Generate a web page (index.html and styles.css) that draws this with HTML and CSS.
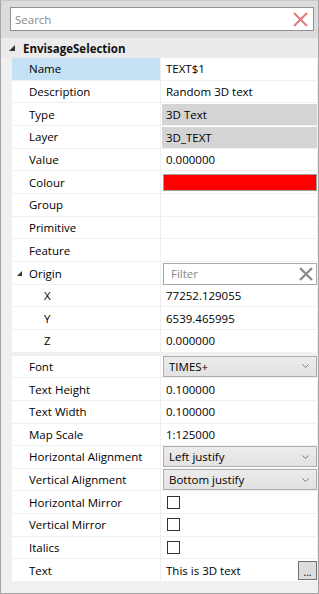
FILE: index.html
```html
<!DOCTYPE html>
<html>
<head>
  <title>Properties</title>
  <link rel="stylesheet" href="styles.css">
</head>
<body>
  <div class="panel">
    <div class="search-bar">
      <div class="search-box">
        <span class="placeholder">Search</span>
        <svg class="clear red" width="15" height="15" viewBox="0 0 15 15"><path d="M1 1 L14 14 M14 1 L1 14" stroke="#e57a7a" stroke-width="2"/></svg>
      </div>
    </div>

    <div class="grid">
      <div class="category">
        <svg class="tri" width="6" height="6" viewBox="0 0 6 6"><polygon points="6,0 6,6 0,6" fill="#333"/></svg>
        <span>EnvisageSelection</span>
      </div>

      <div class="row selected"><div class="name">Name</div><div class="value">TEXT$1</div></div>
      <div class="row"><div class="name">Description</div><div class="value">Random 3D text</div></div>
      <div class="row"><div class="name">Type</div><div class="value"><div class="readonly">3D Text</div></div></div>
      <div class="row"><div class="name">Layer</div><div class="value"><div class="readonly">3D_TEXT</div></div></div>
      <div class="row"><div class="name">Value</div><div class="value">0.000000</div></div>
      <div class="row"><div class="name">Colour</div><div class="value"><div class="swatch"></div></div></div>
      <div class="row"><div class="name">Group</div><div class="value"></div></div>
      <div class="row"><div class="name">Primitive</div><div class="value"></div></div>
      <div class="row"><div class="name">Feature</div><div class="value"></div></div>

      <div class="row">
        <div class="name sub-head">
          <svg class="tri small" width="5" height="5" viewBox="0 0 5 5"><polygon points="5,0 5,5 0,5" fill="#333"/></svg>
          Origin
        </div>
        <div class="value">
          <div class="filter">
            <span class="placeholder">Filter</span>
            <svg class="clear" width="14" height="14" viewBox="0 0 14 14"><path d="M1 1 L13 13 M13 1 L1 13" stroke="#8c8c8c" stroke-width="2.4"/></svg>
          </div>
        </div>
      </div>
      <div class="row"><div class="name child">X</div><div class="value">77252.129055</div></div>
      <div class="row"><div class="name child">Y</div><div class="value">6539.465995</div></div>
      <div class="row last-child"><div class="name child">Z</div><div class="value">0.000000</div></div>

      <div class="row"><div class="name">Font</div><div class="value"><div class="combo">TIMES+<svg width="7" height="4" viewBox="0 0 7 4"><path d="M0.5 0.5 L3.5 3.5 L6.5 0.5" fill="none" stroke="#777"/></svg></div></div></div>
      <div class="row"><div class="name">Text Height</div><div class="value">0.100000</div></div>
      <div class="row"><div class="name">Text Width</div><div class="value">0.100000</div></div>
      <div class="row"><div class="name">Map Scale</div><div class="value">1:125000</div></div>
      <div class="row"><div class="name">Horizontal Alignment</div><div class="value"><div class="combo">Left justify<svg width="7" height="4" viewBox="0 0 7 4"><path d="M0.5 0.5 L3.5 3.5 L6.5 0.5" fill="none" stroke="#777"/></svg></div></div></div>
      <div class="row"><div class="name">Vertical Alignment</div><div class="value"><div class="combo">Bottom justify<svg width="7" height="4" viewBox="0 0 7 4"><path d="M0.5 0.5 L3.5 3.5 L6.5 0.5" fill="none" stroke="#777"/></svg></div></div></div>
      <div class="row"><div class="name">Horizontal Mirror</div><div class="value"><span class="check"></span></div></div>
      <div class="row"><div class="name">Vertical Mirror</div><div class="value"><span class="check"></span></div></div>
      <div class="row"><div class="name">Italics</div><div class="value"><span class="check"></span></div></div>
      <div class="row"><div class="name">Text</div><div class="value text-edit">This is 3D text<span class="ellipsis">...</span></div></div>
    </div>
  </div>
</body>
</html>
```

FILE: styles.css
```css
body {
  margin: 0;
  font-family: "Open Sans", "Noto Sans", sans-serif;
  font-size: 11.5px;
  color: #000;
  background: #fff;
}

.panel {
  width: 319px;
  height: 594px;
  box-sizing: border-box;
  border: 1px solid #a6a6a6;
  border-top-color: #c8c8c8;
  background: #f0f0f0;
  display: flex;
  flex-direction: column;
}

/* Search */
.search-bar {
  background: #dcdcdc;
  height: 37px;
  padding: 6px 4px 0 9px;
  box-sizing: border-box;
}

.search-box {
  height: 24px;
  box-sizing: border-box;
  border: 1px solid #8f8f8f;
  background: #fff;
  display: flex;
  align-items: center;
  justify-content: space-between;
  padding: 0 5px 0 4px;
}

.placeholder {
  color: #8a8a8a;
}

/* Grid */
.grid {
  background: #f0f0f0;
}

.category {
  height: 20px;
  display: flex;
  align-items: center;
  gap: 8px;
  padding-left: 8px;
  font-weight: bold;
  background: #ebebeb;
  color: #111;
}

.tri { flex: none; }

.row {
  display: grid;
  grid-template-columns: 149px 1fr;
  height: 22.67px;
  box-sizing: border-box;
  margin-left: 11px;
  margin-right: 1px;
  border-bottom: 1px solid #f0f0f0;
  background: #fff;
}

.row.last-child {
  border-bottom-width: 4px;
  height: 25.67px;
}

.name {
  display: flex;
  align-items: center;
  padding-left: 17px;
  border-right: 1px solid #f0f0f0;
  white-space: nowrap;
}

.selected .name {
  background: #c5e2f4;
}

.name.sub-head {
  padding-left: 5px;
  gap: 7px;
}

.name.child {
  padding-left: 32px;
}

.value {
  display: flex;
  align-items: center;
  padding-left: 5px;
  min-width: 0;
}

.readonly {
  background: #d4d4d4;
  margin-left: -4px;
  align-self: stretch;
  flex: 1;
  display: flex;
  align-items: center;
  padding-left: 4px;
  margin-top: 1px;
}

.swatch {
  flex: 1;
  height: 15px;
  margin-left: -3px;
  border: 1px solid #a0a0a0;
  background: #ff0000;
}

.filter {
  flex: 1;
  height: 22px;
  margin-left: -3px;
  margin-top: 1px;
  box-sizing: border-box;
  border: 1px solid #a8a8a8;
  background: #fff;
  display: flex;
  align-items: center;
  justify-content: space-between;
  padding: 0 3px 0 7px;
}

.combo {
  flex: 1;
  height: 21px;
  margin-left: -3px;
  box-sizing: border-box;
  border: 1px solid #adadad;
  background: linear-gradient(#ececec, #e2e2e2);
  display: flex;
  align-items: center;
  justify-content: space-between;
  padding: 0 7px 0 5px;
}

.check {
  width: 11px;
  height: 11px;
  border: 1px solid #333;
  background: #fff;
  margin-left: 1px;
}

.text-edit {
  justify-content: space-between;
}

.ellipsis {
  width: 17px;
  height: 17px;
  border: 1px solid #707070;
  background: #dddddd;
  font-size: 10px;
  line-height: 20px;
  text-align: center;
  box-sizing: content-box;
}
```
